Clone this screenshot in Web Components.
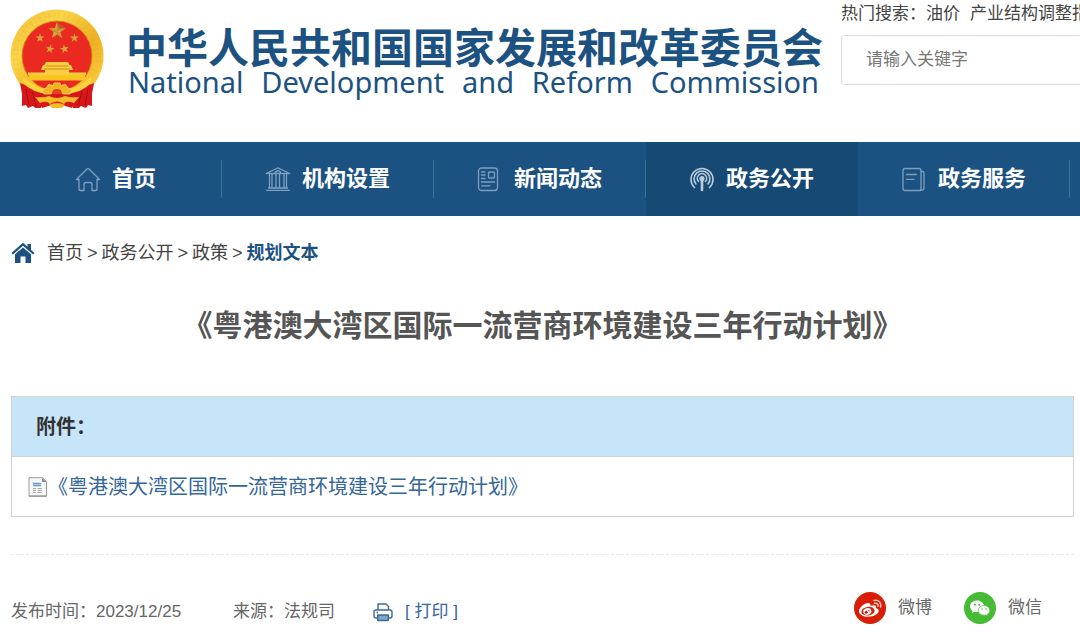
<!DOCTYPE html>
<html lang="zh-CN">
<head>
<meta charset="utf-8">
<meta name="viewport" content="width=device-width, initial-scale=1">
<title>《粤港澳大湾区国际一流营商环境建设三年行动计划》</title>
<style>
  body {
    --blue: #1c5282;
    --blue-dark: #174975;
    --text: #444;
    --muted: #666;
    --line: #d0d0d0;
    margin: 0;
    background: #fff;
    color: var(--text);
    font-family: "Liberation Sans", "Noto Sans CJK SC", sans-serif;
    font-size: 17px;
    line-height: 24px;
    overflow-x: hidden;
  }
</style>
</head>
<body>
  <site-header>
    <hot-search slot="search" words="油价,产业结构调整指导目录"></hot-search>
  </site-header>
  <site-nav>
    <nav-item icon="home">首页</nav-item>
    <nav-item icon="bank">机构设置</nav-item>
    <nav-item icon="news">新闻动态</nav-item>
    <nav-item icon="signal" active>政务公开</nav-item>
    <nav-item icon="doc">政务服务</nav-item>
  </site-nav>
  <article-page>
    <bread-crumb slot="path" path="首页,政务公开,政策,规划文本"></bread-crumb>
    <span slot="title">《粤港澳大湾区国际一流营商环境建设三年行动计划》</span>
    <attachment-box label="附件：">《粤港澳大湾区国际一流营商环境建设三年行动计划》</attachment-box>
    <article-meta slot="meta" date="2023/12/25" source="法规司"></article-meta>
  </article-page>

<script>
const ICONS = {
  home: `<svg width="26" height="26" viewBox="0 0 26 26" fill="none" stroke="currentColor" stroke-width="1.3" stroke-linejoin="round">
    <path d="M1.5 13.5 12 3Q13 2 14 3L24.5 13.5H22V23.5Q22 24.5 21 24.5H17V18Q17 16.5 15.5 16.5H10.5Q9 16.5 9 18V24.5H5Q4 24.5 4 23.5V13.5Z"/></svg>`,
  bank: `<svg width="26" height="26" viewBox="0 0 26 26" fill="none" stroke="currentColor" stroke-width="1.3">
    <path d="M1 7.5 13 2 25 7.5ZM1 24.3H25M3 22H23M10 6.5Q13 3 16 6.5M4.5 8V22M7 8V22M11 8V22M14.5 8V22M19 8V22M21.5 8V22"/></svg>`,
  news: `<svg width="26" height="26" viewBox="0 0 26 26" fill="none" stroke="currentColor" stroke-width="1.3" stroke-linecap="round">
    <rect x="1.5" y="2" width="19" height="22.5" rx="3"/><rect x="11.5" y="6" width="6" height="6" rx="1"/>
    <path d="M4.5 6H8M4.5 9H8M4.5 12.5H8M4.5 16H17.5M4.5 19.8H13"/></svg>`,
  signal: `<svg width="26" height="26" viewBox="0 0 26 26" fill="none" stroke="currentColor" stroke-width="1.6" stroke-linecap="round">
    <path d="M5.5 21.5A11 11 0 1 1 20.5 21.5M7 18A7.9 7.9 0 1 1 19 18M9.5 15.5A4.7 4.7 0 1 1 16.5 15.5"/>
    <circle cx="13" cy="12.5" r="1.8" fill="currentColor"/><path d="M13 14V24" stroke-width="2.6"/></svg>`,
  doc: `<svg width="26" height="26" viewBox="0 0 26 26" fill="none" stroke="currentColor" stroke-width="1.3" stroke-linecap="round">
    <path d="M4 2.5H18Q20 2.5 20 4.5V22.5Q20 24.5 18 24.5H4Q2 24.5 2 22.5V4.5Q2 2.5 4 2.5ZM5.5 8.5H15.5M5.5 13.3H13M20 5.5H21.5Q23 5.5 23 7V22Q23 24.5 18 24.5"/></svg>`,
  crumb: `<svg width="24" height="22" viewBox="0 0 24 22" fill="#1c5282">
    <path d="M.5 11 11 1.5Q12 .7 13 1.5L16.5 4.7V2H20V7.9L23.5 11 22 12.5 12 3.8 2 12.5Z"/>
    <path d="M4 12.3 12 5.5 20 12.3V21H14.5V14.5H9.5V21H4Z"/></svg>`,
  file: `<svg width="20" height="20" viewBox="0 0 20 20">
    <path d="M1 .7H14.5L18.5 4.5V19.2H1Z" fill="#f7f8fa" stroke="#999"/>
    <path d="M14 1V5H18.5Z" fill="#8a8a8a"/>
    <path d="M5 6.5H13M5 8.5H13" stroke="#6a9bd0" stroke-width="1.4"/>
    <path d="M5 11.5H8M9.5 11.5H14M5 13.5H8M9.5 13.5H14M5 15.5H8M9.5 15.5H14" stroke="#a9a9a9"/>
    <path d="M1 19H18.5" stroke="#888"/></svg>`,
  print: `<svg width="20" height="20" viewBox="0 0 20 20" fill="none" stroke="#3c6b95" stroke-width="1.4" stroke-linejoin="round">
    <path d="M5 8V2H13L15.5 4.5V8M4.5 16H3Q1 16 1 14V10Q1 8 3 8H17Q19 8 19 10V14Q19 16 17 16H15.5"/>
    <rect x="4.7" y="13" width="10.6" height="5.5" fill="#7fa6c9"/><path d="M3.5 10.5H5"/></svg>`,
  weibo: `<svg width="32" height="32" viewBox="0 0 32 32">
    <circle cx="16" cy="16" r="16" fill="#d81e06"/>
    <path d="M14 11C10.5 11 5 15.5 5 19.3 5 22.8 9.5 24.8 14.2 24.8 20.5 24.8 24.7 21.5 24.7 18.8 24.7 17.2 23.3 16.3 21.8 15.9 22.6 13.5 21.3 12.3 16.5 13.8 16.8 12.3 16 11 14 11Z" fill="#fff"/>
    <ellipse cx="14" cy="19.2" rx="6.7" ry="4.3" fill="#d81e06" transform="rotate(-8 14 19.2)"/>
    <ellipse cx="13.3" cy="19.5" rx="4.1" ry="3.3" fill="#fff" transform="rotate(-15 13.3 19.5)"/>
    <circle cx="12.2" cy="20.2" r="1.5" fill="#d81e06"/><circle cx="14.9" cy="18.7" r=".7" fill="#d81e06"/>
    <path d="M20 8.5C24.5 7.5 27.8 10.8 26.5 15M20.5 11.3C23 10.8 24.6 12.3 24 14.3" fill="none" stroke="#f6c5bd" stroke-width="1.4" stroke-linecap="round"/></svg>`,
  wechat: `<svg width="32" height="32" viewBox="0 0 32 32">
    <circle cx="16" cy="16" r="16" fill="#46bb36"/>
    <path d="M13 8.5C9 8.5 6 11 6 14.3 6 16.2 7 17.8 8.6 18.9L8 21 10.5 19.7C11.3 20 12.1 20.1 13 20.1 17 20.1 20 17.6 20 14.3S17 8.5 13 8.5Z" fill="#fff"/>
    <path d="M20 13.5C16.7 13.5 14.2 15.6 14.2 18.4S16.7 23.2 20 23.2C20.7 23.2 21.3 23.1 22 22.9L24 24 23.5 22.2C24.9 21.3 25.8 20 25.8 18.4 25.8 15.6 23.3 13.5 20 13.5Z" fill="#fff" stroke="#46bb36" stroke-width=".7"/>
    <g fill="#46bb36"><circle cx="10.8" cy="12.7" r="1"/><circle cx="15.2" cy="12.7" r="1"/><circle cx="18.1" cy="17" r=".8"/><circle cx="22" cy="17" r=".8"/></g></svg>`
};

class StateEmblem extends HTMLElement {
  constructor() {
    super();
    this.attachShadow({ mode: "open" });
  }

  connectedCallback() {
    this.shadowRoot.innerHTML = `
      <style>
        :host { display: block; flex: none; }
        svg { display: block; }
      </style>
      <svg width="94" height="100" viewBox="0 0 94 100" role="img" aria-label="国徽">
        <defs>
          <linearGradient id="gold" x1="0" y1="0" x2="1" y2="1">
            <stop offset="0" stop-color="#f2b93a"/><stop offset=".3" stop-color="#fbd548"/>
            <stop offset=".6" stop-color="#eeb022"/><stop offset="1" stop-color="#ffd747"/>
          </linearGradient>
          <path id="star" d="M0-10 2.3-3.2 9.5-3.1 3.8 1.2 5.9 8.1 0 4 -5.9 8.1 -3.8 1.2 -9.5-3.1 -2.3-3.2Z"/>
        </defs>
        <circle cx="47" cy="47" r="46.5" fill="url(#gold)"/>
        <circle cx="47" cy="47" r="41" fill="none" stroke="#d99a22" stroke-width="6" stroke-dasharray="1 3 2 4" opacity=".12"/>
        <circle cx="47" cy="47" r="35" fill="#ea2a20" stroke="#d58a18" stroke-width=".8"/>
        <g fill="#d9a23a">
          <use href="#star" transform="translate(47 22) scale(.9)"/>
          <use href="#star" transform="translate(30 29) scale(.47)"/>
          <use href="#star" transform="translate(64.5 29) scale(.47)"/>
          <use href="#star" transform="translate(40 40) rotate(12) scale(.47)"/>
          <use href="#star" transform="translate(54.5 40) rotate(-12) scale(.47)"/>
        </g>
        <path d="M47 13V22L55.5 19ZM47 22 52 29.5 47 26ZM47 22 38.5 19 45 23Z" fill="#a9752a" opacity=".55"/>
        <g fill="#fbd040">
          <path d="M36 53H58L60 57H34ZM33 56H61L63 61H31ZM35 60H59V64H35ZM18 63.5H76V66H18Z"/>
          <path d="M18.5 66H75.5L74 71.5H20Z" fill="#fbc51f"/>
          <path d="M34 60H60M36 57H58" stroke="#c57a18" stroke-width=".8"/>
        </g>
        <path d="M10 74Q24 80 38 84L31 99H25L23 97 18 99 16 96 12 97 12 85Z" fill="#d9171b"/>
        <path d="M84 74Q70 80 56 84L63 99H69L71 97 76 99 78 96 82 97 82 85Z" fill="#d9171b"/>
        <path d="M28 86Q47 80 66 86L62 99Q47 93 32 99Z" fill="#d9171b"/>
        <path d="M16 80 19 96M22 82 26 97M78 80 75 96M72 82 68 97" stroke="#9d1015" stroke-width="1"/>
        <path d="M13 68Q26 79 38 80L39 85Q22 84 12 73ZM81 68Q68 79 56 80L55 85Q72 84 82 73Z" fill="#ffd13a"/>
        <path d="M36 79 39 75 43 77 44 74H50L51 77 55 75 58 79 62 81 60 85H53Q47 77 41 85H34L32 81Z" fill="#f3b322" stroke="#ffdf62" stroke-width=".8"/>
        <path d="M42 85Q42 80 47 80T52 85Z" fill="#e0401c"/>
        <path d="M25 88Q34 89 39 87Q47 91 55 87Q60 89 69 88L64 94Q56 91 54 95Q47 90 40 95Q37 91 30 94Z" fill="#f6bb27"/>
        <path d="M39 96Q47 92 55 96L52 99H42Z" fill="#f6bb27"/>
      </svg>`;
  }
}

customElements.define("state-emblem", StateEmblem);

class SiteHeader extends HTMLElement {
  constructor() {
    super();
    this.attachShadow({ mode: "open" });
  }

  connectedCallback() {
    this.shadowRoot.innerHTML = `
      <style>
        :host { display: block; }
        header {
          display: flex;
          align-items: flex-start;
          height: 142px;
          padding-left: 10px;
          overflow: hidden;
        }
        state-emblem { margin-top: 9px; }
        .name {
          flex: none;
          margin: 28px 0 0 22px;
          color: var(--blue);
          white-space: nowrap;
        }
        h1 { margin: 0; font-size: 41px; line-height: 42px; font-weight: 700; }
        p {
          display: flex;
          justify-content: space-between;
          margin: 0 4px 0 2px;
          font: 29px/24px "Noto Sans", sans-serif;
        }
        slot { display: block; flex: none; margin-left: 18px; }
      </style>
      <header>
        <state-emblem></state-emblem>
        <div class="name">
          <h1>中华人民共和国国家发展和改革委员会</h1>
          <p lang="en"><span>National </span><span>Development </span><span>and </span><span>Reform </span><span>Commission</span></p>
        </div>
        <slot name="search"></slot>
      </header>`;
  }
}

customElements.define("site-header", SiteHeader);

class HotSearch extends HTMLElement {
  constructor() {
    super();
    this.attachShadow({ mode: "open" });
  }

  connectedCallback() {
    const words = this.getAttribute("words").split(",");
    this.shadowRoot.innerHTML = `
      <style>
        :host { display: block; width: 380px; }
        .hot { display: flex; margin: 2px 0 9px; white-space: nowrap; }
        a { color: inherit; text-decoration: none; margin-right: 10px; }
        input {
          box-sizing: border-box;
          width: 100%;
          height: 50px;
          padding: 0 24px;
          border: 1px solid #ddd;
          border-radius: 4px;
          font: inherit;
        }
        input::placeholder { color: #777; }
      </style>
      <div class="hot"><span>热门搜索：</span>${words.map((w) => `<a href="#">${w}</a>`).join("")}</div>
      <input type="text" placeholder="请输入关键字" aria-label="请输入关键字">`;
  }
}

customElements.define("hot-search", HotSearch);

class SiteNav extends HTMLElement {
  constructor() {
    super();
    this.attachShadow({ mode: "open" });
  }

  connectedCallback() {
    this.shadowRoot.innerHTML = `
      <style>
        :host { display: block; background: var(--blue); }
        nav {
          display: grid;
          grid-template-columns: repeat(5, 1fr);
          height: 74px;
          padding: 0 10px;
        }
      </style>
      <nav><slot></slot></nav>`;
  }
}

customElements.define("site-nav", SiteNav);

class NavItem extends HTMLElement {
  constructor() {
    super();
    this.attachShadow({ mode: "open" });
  }

  connectedCallback() {
    this.shadowRoot.innerHTML = `
      <style>
        :host { display: flex; align-items: center; }
        :host([active]) { background: var(--blue-dark); }
        a {
          display: flex;
          flex: 1;
          align-items: center;
          justify-content: center;
          gap: 11px;
          height: 38px;
          border-right: 1px solid #3e6e99;
          color: #fff;
          font-size: 22px;
          font-weight: 700;
          text-decoration: none;
          white-space: nowrap;
        }
        :host([active]) a { border-color: transparent; }
        svg { display: block; color: #7d9fbf; }
        :host([active]) svg { color: #b9cddd; }
      </style>
      <a href="#">${ICONS[this.getAttribute("icon")]}<span><slot></slot></span></a>`;
  }
}

customElements.define("nav-item", NavItem);

class BreadCrumb extends HTMLElement {
  constructor() {
    super();
    this.attachShadow({ mode: "open" });
  }

  connectedCallback() {
    const path = this.getAttribute("path").split(",");
    const last = path.pop();
    this.shadowRoot.innerHTML = `
      <style>
        :host { display: block; }
        nav { display: flex; align-items: center; gap: 4px; font-size: 18px; }
        svg { display: block; margin-right: 8px; }
        a { color: inherit; text-decoration: none; }
        b { color: var(--blue); }
      </style>
      <nav>${ICONS.crumb}${path.map((p) => `<a href="#">${p}</a><span>&gt;</span>`).join("")}<b>${last}</b></nav>`;
  }
}

customElements.define("bread-crumb", BreadCrumb);

class ArticlePage extends HTMLElement {
  constructor() {
    super();
    this.attachShadow({ mode: "open" });
  }

  connectedCallback() {
    this.shadowRoot.innerHTML = `
      <style>
        :host { display: block; padding: 25px 6px 0 11px; }
        h2 {
          margin: 40px 0 49px;
          color: #555;
          font-size: 30px;
          line-height: 42px;
          text-align: center;
        }
        hr { margin: 37px 0 36px; border: 0; border-top: 1px dashed #e8e8e8; }
      </style>
      <main>
        <slot name="path"></slot>
        <h2><slot name="title"></slot></h2>
        <slot></slot>
        <hr>
        <slot name="meta"></slot>
      </main>`;
  }
}

customElements.define("article-page", ArticlePage);

class AttachmentBox extends HTMLElement {
  constructor() {
    super();
    this.attachShadow({ mode: "open" });
  }

  connectedCallback() {
    this.shadowRoot.innerHTML = `
      <style>
        :host { display: block; border: 1px solid var(--line); font-size: 20px; }
        h3 {
          margin: 0;
          padding: 1px 24px 0;
          border-bottom: 1px solid var(--line);
          background: #c6e5f9;
          color: #333;
          font-size: 20px;
          line-height: 58px;
        }
        a {
          display: flex;
          align-items: center;
          padding: 1px 16px 0;
          color: #336699;
          line-height: 58px;
          text-decoration: none;
        }
      </style>
      <h3>${this.getAttribute("label")}</h3>
      <a href="#">${ICONS.file}<span><slot></slot></span></a>`;
  }
}

customElements.define("attachment-box", AttachmentBox);

class ArticleMeta extends HTMLElement {
  constructor() {
    super();
    this.attachShadow({ mode: "open" });
  }

  connectedCallback() {
    this.shadowRoot.innerHTML = `
      <style>
        :host { display: flex; align-items: flex-start; color: var(--muted); }
        .info { display: flex; align-items: center; padding-top: 9px; }
        .source { margin: 0 38px 0 52px; }
        button, a { display: flex; align-items: center; color: inherit; font: inherit; text-decoration: none; }
        button { gap: 12px; padding: 0; border: 0; background: none; color: #336699; cursor: pointer; }
        .share { display: flex; gap: 32px; margin: 0 32px 0 auto; padding-top: 1px; }
        .share a { gap: 12px; }
        svg { display: block; }
      </style>
      <div class="info">
        <span>发布时间：${this.getAttribute("date")}</span>
        <span class="source">来源：${this.getAttribute("source")}</span>
        <button type="button">${ICONS.print}<span>[ 打印 ]</span></button>
      </div>
      <div class="share">
        <a href="#">${ICONS.weibo}<span>微博</span></a>
        <a href="#">${ICONS.wechat}<span>微信</span></a>
      </div>`;
  }
}

customElements.define("article-meta", ArticleMeta);
</script>
</body>
</html>
